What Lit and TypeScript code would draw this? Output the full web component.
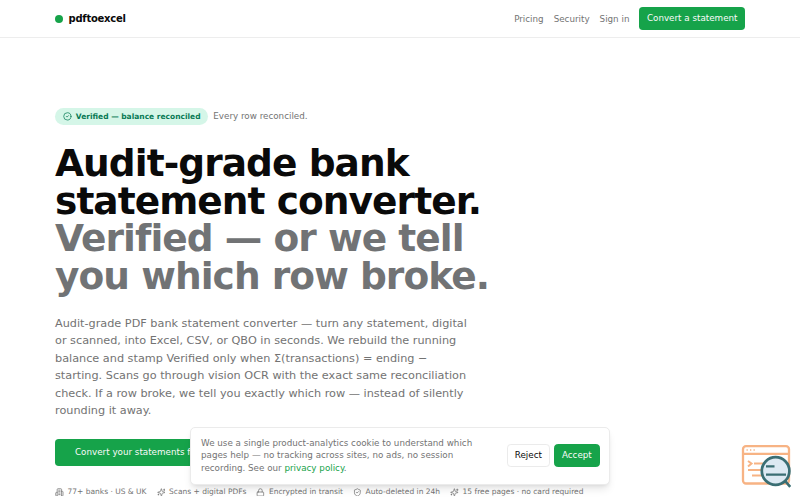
import { LitElement, html, css, svg } from 'lit';
import { customElement } from 'lit/decorators.js';

const icons = {
  check: svg`<circle cx="12" cy="12" r="10" /><path d="m9 12 2 2 4-4" />`,
  bank: svg`
    <path d="M6 22V4a2 2 0 0 1 2-2h8a2 2 0 0 1 2 2v18Z" />
    <path d="M6 12H4a2 2 0 0 0-2 2v6a2 2 0 0 0 2 2h2" />
    <path d="M18 9h2a2 2 0 0 1 2 2v9a2 2 0 0 1-2 2h-2" />
    <path d="M10 6h4M10 10h4M10 14h4M10 18h4" />`,
  sparkles: svg`
    <path d="M9.94 15.5A2 2 0 0 0 8.5 14.06l-6.14-1.58a.5.5 0 0 1 0-.96L8.5 9.94A2 2 0 0 0 9.94 8.5l1.58-6.14a.5.5 0 0 1 .96 0l1.58 6.14a2 2 0 0 0 1.44 1.44l6.14 1.58a.5.5 0 0 1 0 .96l-6.14 1.58a2 2 0 0 0-1.44 1.44l-1.58 6.14a.5.5 0 0 1-.96 0z" />
    <path d="M20 3v4M22 5h-4M4 17v2M5 18H3" />`,
  lock: svg`<rect x="3" y="11" width="18" height="11" rx="2" /><path d="M7 11V7a5 5 0 0 1 10 0v4" />`,
  shield: svg`
    <path d="M20 13c0 5-3.5 7.5-7.66 8.95a1 1 0 0 1-.67-.01C7.5 20.5 4 18 4 13V6a1 1 0 0 1 1-1c2 0 4.5-1.2 6.24-2.72a1.17 1.17 0 0 1 1.52 0C14.51 3.81 17 5 19 5a1 1 0 0 1 1 1z" />
    <path d="m9 12 2 2 4-4" />`,
};

const features = [
  { icon: icons.bank, label: '77+ banks · US & UK' },
  { icon: icons.sparkles, label: 'Scans + digital PDFs' },
  { icon: icons.lock, label: 'Encrypted in transit' },
  { icon: icons.shield, label: 'Auto-deleted in 24h' },
  { icon: icons.sparkles, label: '15 free pages · no card required' },
];

const icon = (shape: unknown) => html`<svg class="icon" viewBox="0 0 24 24">${shape}</svg>`;

@customElement('site-header')
export class SiteHeader extends LitElement {
  static styles = css`
    :host {
      display: block;
      border-bottom: 1px solid #ededed;
    }

    .bar {
      display: flex;
      align-items: center;
      justify-content: space-between;
      height: 37px;
      padding: 0 55px;
    }

    .brand {
      display: flex;
      align-items: center;
      gap: 5px;
      font-size: 10px;
      font-weight: bold;
      letter-spacing: -0.25px;
      color: #0a0a0a;
    }

    .dot {
      width: 8px;
      height: 8px;
      margin: 1px 0.5px 0 0;
      border-radius: 50%;
      background: #16a34a;
    }

    nav {
      display: flex;
      align-items: center;
      gap: 10px;
      font-size: 8.75px;
      color: #737373;
    }

    .button {
      height: 22.5px;
      padding: 0 7.5px;
      border-radius: 3.75px;
      background: #16a34a;
      color: #fafafa;
      line-height: 22.5px;
    }
  `;

  render() {
    return html`
      <div class="bar">
        <div class="brand"><span class="dot"></span>pdftoexcel</div>
        <nav>
          <span>Pricing</span>
          <span>Security</span>
          <span>Sign in</span>
          <span class="button">Convert a statement</span>
        </nav>
      </div>
    `;
  }
}

@customElement('hero-section')
export class HeroSection extends LitElement {
  static styles = css`
    :host {
      display: block;
      padding: 70px 55px 0;
    }

    .icon {
      flex: none;
      width: 8.75px;
      height: 8.75px;
      fill: none;
      stroke: currentColor;
      stroke-width: 2;
      stroke-linecap: round;
      stroke-linejoin: round;
    }

    .verified {
      display: flex;
      align-items: center;
      gap: 5px;
      height: 16.5px;
      font-size: 8.75px;
      color: #737373;
    }

    .badge {
      display: flex;
      align-items: center;
      gap: 4px;
      height: 16.5px;
      padding: 0 7.75px 0 8px;
      border-radius: 9px;
      background: #d5f6e8;
      color: #087a55;
      font-size: 7.5px;
      font-weight: bold;
    }

    h1 {
      margin: 20.5px 0 0;
      font-size: 37.5px;
      line-height: 37.5px;
      letter-spacing: -0.9375px;
      color: #0a0a0a;
      white-space: nowrap;
    }

    .muted {
      color: #717375;
    }

    .lead {
      margin: 19.5px 0 0;
      font-size: 11.25px;
      line-height: 17.5px;
      color: #737373;
      white-space: nowrap;
    }

    .cta {
      box-sizing: border-box;
      width: 172px;
      height: 27.5px;
      margin-top: 19.4px;
      padding: 0.5px 0 0 20px;
      border-radius: 3.75px;
      background: #16a34a;
      color: #fafafa;
      font-size: 8.75px;
      line-height: 27.5px;
      white-space: nowrap;
    }

    .features {
      display: flex;
      gap: 10px;
      margin-top: 20.6px;
      font-size: 7.5px;
      line-height: 10px;
      color: #737373;
      white-space: nowrap;
    }

    .feature {
      display: flex;
      align-items: center;
      gap: 3.75px;
    }
  `;

  render() {
    return html`
      <div class="verified">
        <span class="badge">${icon(icons.check)}Verified — balance reconciled</span>
        Every row reconciled.
      </div>
      <h1>
        Audit-grade bank<br />statement converter.<br />
        <span class="muted">Verified — or we tell<br />you which row broke.</span>
      </h1>
      <p class="lead">
        Audit-grade PDF bank statement converter — turn any statement, digital<br />
        or scanned, into Excel, CSV, or QBO in seconds. We rebuild the running<br />
        balance and stamp Verified only when Σ(transactions) = ending −<br />
        starting. Scans go through vision OCR with the exact same reconciliation<br />
        check. If a row broke, we tell you exactly which row — instead of silently<br />
        rounding it away.
      </p>
      <div class="cta">Convert your statements free</div>
      <div class="features">
        ${features.map((f) => html`<span class="feature">${icon(f.icon)}${f.label}</span>`)}
      </div>
    `;
  }
}

@customElement('cookie-banner')
export class CookieBanner extends LitElement {
  static styles = css`
    :host {
      box-sizing: border-box;
      display: flex;
      align-items: center;
      justify-content: space-between;
      width: 420px;
      height: 58px;
      padding: 0 9.5px 0 10px;
      border: 1px solid #ebebeb;
      border-radius: 5px;
      background: #fff;
      box-shadow: 0 6px 9px -2px rgb(0 0 0 / 0.1), 0 2px 4px -2px rgb(0 0 0 / 0.1);
      font-size: 8.75px;
    }

    p {
      margin: 0;
      line-height: 12.5px;
      color: #737373;
      white-space: nowrap;
    }

    .link {
      color: #16a34a;
    }

    .actions {
      display: flex;
      gap: 4.5px;
    }

    .button {
      box-sizing: border-box;
      height: 22.5px;
      padding: 0 6.75px;
      border: 1px solid #ebebeb;
      border-radius: 3.75px;
      color: #0a0a0a;
      line-height: 20.5px;
    }

    .accept {
      border-color: #16a34a;
      background: #16a34a;
      color: #fafafa;
    }
  `;

  render() {
    return html`
      <p>
        We use a single product-analytics cookie to understand which<br />
        pages help — no tracking across sites, no ads, no session<br />
        recording. See our <span class="link">privacy policy</span>.
      </p>
      <div class="actions">
        <span class="button">Reject</span>
        <span class="button accept">Accept</span>
      </div>
    `;
  }
}

@customElement('app-root')
export class AppRoot extends LitElement {
  static styles = css`
    :host {
      position: relative;
      display: block;
      width: 800px;
      height: 500px;
      overflow: hidden;
      background: #fff;
      font-family: 'DejaVu Sans', sans-serif;
    }

    .cookies {
      position: absolute;
      left: 190px;
      bottom: 15.5px;
    }

    .inspector {
      position: absolute;
      right: 9px;
      bottom: 12px;
      width: 50px;
      height: 44px;
      fill: none;
    }

    .window {
      stroke: #f7b384;
      stroke-width: 2.3;
    }

    .glass {
      fill: #dce9f2;
      stroke: #3a6e73;
      stroke-width: 2.7;
    }
  `;

  render() {
    return html`
      <site-header></site-header>
      <hero-section></hero-section>
      <cookie-banner class="cookies"></cookie-banner>
      <svg class="inspector" viewBox="0 0 50 44">
        <g class="window">
          <rect x="2" y="2.2" width="46" height="37.3" rx="3" />
          <path d="M2 9.8h46" />
          <path d="M5.5 6h1.3M9 6h1.3M12.5 6h1.3" stroke-width="1.3" />
          <path d="m7 17 3.5 2.5L7 22.5M13 19.5h9M7 26h14M11 31.5h10" stroke-width="2" />
        </g>
        <g class="glass">
          <circle cx="34.6" cy="27" r="13.8" />
          <path d="M25 22.3h8.5M25 30.7h20" stroke-width="2.2" />
          <path d="m44.2 37 5 6" />
        </g>
      </svg>
    `;
  }
}
